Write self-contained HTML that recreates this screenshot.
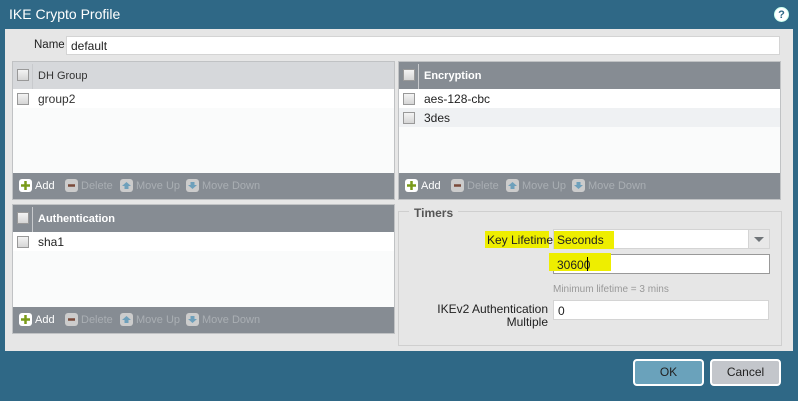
<!DOCTYPE html>
<html><head><style>
*{box-sizing:border-box;margin:0;padding:0}
body{width:798px;height:401px;background:#2f6886;font-family:"Liberation Sans",sans-serif;font-size:11px;position:relative;overflow:hidden;color:#222}
.abs{position:absolute}
.title{left:9px;top:6px;color:#fff;font-size:14px}
.help{left:774px;top:7px;width:15px;height:15px;border-radius:50%;background:#fff;color:#2f6886;font-weight:bold;font-size:11px;text-align:center;line-height:15px;border:1px solid #cfe}
.main{left:5px;top:29px;width:788px;height:322px;background:#e6e6e6}
.inp{background:#fff;border:1px solid #d4d4d4;padding-left:4px;font-size:12px}
.panel{background:#fafbfb;border:1px solid #c0c2c4}
.hdr{position:absolute;left:0;right:0;top:0;height:27px;background:#868c93;color:#fff;font-weight:bold;font-size:11px}
.hdr span{position:absolute;left:25px;top:8px}
.hdr .sep{position:absolute;left:19px;top:2px;bottom:0;width:1px;background:#c8cacd}
.cb{position:absolute;width:12px;height:12px;border:1px solid #999;background:linear-gradient(#f3f3f3,#d5d5d5)}
.row{position:absolute;left:0;right:0;height:19px;font-size:12px}
.row span{position:absolute;left:25px;top:3px}
.tb{position:absolute;left:0;right:0;bottom:0;height:26px;background:#868c93;color:#fff;font-size:11px}
.tb .b{position:absolute;top:6px;width:13px;height:13px;border-radius:3px;background:#fff}
.tb .t{position:absolute;top:7px;color:#a9aeb3}
</style></head><body>
<div class="abs title">IKE Crypto Profile</div>
<div class="abs help">?</div>
<div class="abs main"></div>
<div class="abs" style="left:34px;top:39px;font-size:11.5px">Name</div>
<div class="abs inp" style="left:66px;top:36px;width:714px;height:19px;padding-top:2px">default</div>

<!-- DH -->
<div class="abs panel" style="left:12px;top:61px;width:383px;height:139px">
 <div class="hdr" style="background:#d6d8db;color:#333;font-weight:normal"><div class="cb" style="left:4px;top:7px"></div><div class="sep"></div><span>DH Group</span></div>
 <div class="row" style="top:27px;background:#fff"><div class="cb" style="left:4px;top:4px"></div><span style="color:#333">group2</span></div>
 <div class="tb"><div class="b" style="left:6px;background:#fff"><svg width="13" height="13"><path d="M6.5 2v9M2 6.5h9" stroke="#7a9b1a" stroke-width="2.5"/></svg></div><div class="abs" style="left:22px;top:7px">Add</div>
 <div class="b" style="left:52px;background:#ccc"><svg width="13" height="13"><path d="M3 6.5h7" stroke="#7a4a3a" stroke-width="2.5"/></svg></div><div class="t" style="left:68px">Delete</div>
 <div class="b" style="left:107px;background:#ccc"><svg width="13" height="13"><path d="M2 7L6.5 3L11 7H8.5v3h-4V7z" fill="#6ea0bb"/></svg></div><div class="t" style="left:123px">Move Up</div>
 <div class="b" style="left:173px;background:#ccc"><svg width="13" height="13"><path d="M2 6L6.5 10L11 6H8.5V3h-4v3z" fill="#6ea0bb"/></svg></div><div class="t" style="left:189px">Move Down</div></div>
</div>

<!-- Encryption -->
<div class="abs panel" style="left:398px;top:61px;width:383px;height:139px">
 <div class="hdr"><div class="cb" style="left:4px;top:7px"></div><div class="sep"></div><span>Encryption</span></div>
 <div class="row" style="top:27px;background:#fff"><div class="cb" style="left:4px;top:4px"></div><span>aes-128-cbc</span></div>
 <div class="row" style="top:46px;background:#eff1f3"><div class="cb" style="left:4px;top:4px"></div><span>3des</span></div>
 <div class="tb"><div class="b" style="left:6px"><svg width="13" height="13"><path d="M6.5 2v9M2 6.5h9" stroke="#7a9b1a" stroke-width="2.5"/></svg></div><div class="abs" style="left:22px;top:7px">Add</div>
 <div class="b" style="left:52px;background:#ccc"><svg width="13" height="13"><path d="M3 6.5h7" stroke="#7a4a3a" stroke-width="2.5"/></svg></div><div class="t" style="left:68px">Delete</div>
 <div class="b" style="left:107px;background:#ccc"><svg width="13" height="13"><path d="M2 7L6.5 3L11 7H8.5v3h-4V7z" fill="#6ea0bb"/></svg></div><div class="t" style="left:123px">Move Up</div>
 <div class="b" style="left:173px;background:#ccc"><svg width="13" height="13"><path d="M2 6L6.5 10L11 6H8.5V3h-4v3z" fill="#6ea0bb"/></svg></div><div class="t" style="left:189px">Move Down</div></div>
</div>

<!-- Auth -->
<div class="abs panel" style="left:12px;top:204px;width:383px;height:130px">
 <div class="hdr"><div class="cb" style="left:4px;top:7px"></div><div class="sep"></div><span>Authentication</span></div>
 <div class="row" style="top:27px;background:#fff"><div class="cb" style="left:4px;top:4px"></div><span>sha1</span></div>
 <div class="tb"><div class="b" style="left:6px"><svg width="13" height="13"><path d="M6.5 2v9M2 6.5h9" stroke="#7a9b1a" stroke-width="2.5"/></svg></div><div class="abs" style="left:22px;top:7px">Add</div>
 <div class="b" style="left:52px;background:#ccc"><svg width="13" height="13"><path d="M3 6.5h7" stroke="#7a4a3a" stroke-width="2.5"/></svg></div><div class="t" style="left:68px">Delete</div>
 <div class="b" style="left:107px;background:#ccc"><svg width="13" height="13"><path d="M2 7L6.5 3L11 7H8.5v3h-4V7z" fill="#6ea0bb"/></svg></div><div class="t" style="left:123px">Move Up</div>
 <div class="b" style="left:173px;background:#ccc"><svg width="13" height="13"><path d="M2 6L6.5 10L11 6H8.5V3h-4v3z" fill="#6ea0bb"/></svg></div><div class="t" style="left:189px">Move Down</div></div>
</div>

<!-- Timers -->
<div class="abs" style="left:398px;top:211px;width:384px;height:135px;border:1px solid #cfcfcf"></div>
<div class="abs" style="left:409px;top:206px;padding:0 5px;background:#e6e6e6;color:#555;font-weight:bold;font-size:12px">Timers</div>
<div class="abs" style="left:485px;top:231px;width:64px;height:17px;background:#eeee00"></div>
<div class="abs" style="left:487px;top:233px;font-size:12px">Key Lifetime</div>
<div class="abs inp" style="left:553px;top:229px;width:217px;height:20px"></div>
<div class="abs" style="left:554px;top:231px;width:60px;height:18px;background:#eeee00"></div>
<div class="abs" style="left:557px;top:233px;font-size:12px">Seconds</div>
<div class="abs" style="left:748px;top:229px;width:22px;height:20px;background:#e8e8e8;border:1px solid #d4d4d4"><svg width="20" height="18"><path d="M5 7h10l-5 5z" fill="#6f7478"/></svg></div>
<div class="abs inp" style="left:553px;top:254px;width:217px;height:20px;border-color:#999"></div>
<div class="abs" style="left:549px;top:253px;width:62px;height:18px;background:#eeee00"></div>
<div class="abs" style="left:557px;top:258px;font-size:12px">30600</div>
<div class="abs" style="left:587px;top:257px;width:1px;height:14px;background:#000"></div>
<div class="abs" style="left:553px;top:284px;color:#999;font-size:10px">Minimum lifetime = 3 mins</div>
<div class="abs" style="left:430px;top:303px;width:118px;text-align:right;font-size:12px;line-height:13px">IKEv2 Authentication<br>Multiple</div>
<div class="abs inp" style="left:553px;top:300px;width:216px;height:20px;padding-top:3px">0</div>

<div class="abs" style="left:633px;top:359px;width:71px;height:27px;border:2px solid #fff;border-radius:4px;background:#6aa2bb;text-align:center;line-height:23px;font-size:12px">OK</div>
<div class="abs" style="left:710px;top:359px;width:71px;height:27px;border:2px solid #fff;border-radius:4px;background:#c3c6cb;text-align:center;line-height:23px;font-size:12px">Cancel</div>
</body></html>
